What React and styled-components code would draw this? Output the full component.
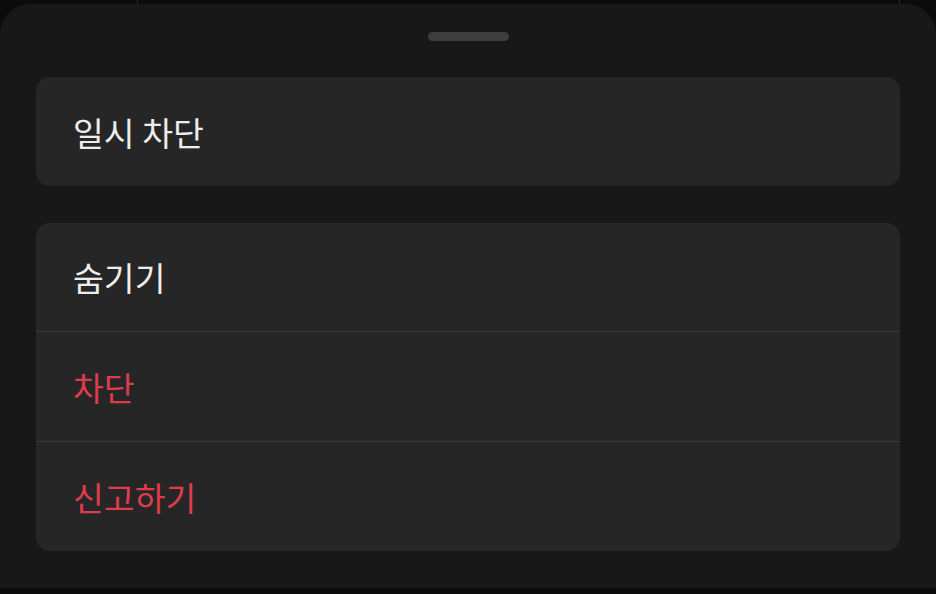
import React from "react";
import styled, { createGlobalStyle } from "styled-components";

const Global = createGlobalStyle`
  html, body {
    margin: 0;
    padding: 0;
    width: 936px;
    height: 594px;
    overflow: hidden;
    background-color: #0b0b0b;
    background-image:
      linear-gradient(#2a2a2a, #2a2a2a),
      linear-gradient(#2a2a2a, #2a2a2a);
    background-size: 1px 4px, 1px 4px;
    background-position: 137px 0, 899px 0;
    background-repeat: no-repeat;
    font-family: "Noto Sans CJK KR", "Noto Sans", sans-serif;
  }
  #root { width: 936px; height: 594px; }
`;

const Sheet = styled.div`
  margin-top: 4px;
  height: 584px;
  box-sizing: border-box;
  background: #181818;
  border-radius: 30px 30px 0 0;
  padding: 28px 36px 0;
  display: flex;
  flex-direction: column;
  align-items: stretch;
`;

const Handle = styled.div`
  align-self: center;
  width: 81px;
  height: 9px;
  border-radius: 5px;
  background: #3d3d3d;
  margin-bottom: 36px;
`;

const Group = styled.div`
  background: #262626;
  border-radius: 14px;
  overflow: hidden;
  display: flex;
  flex-direction: column;
  margin-bottom: 37px;
`;

const Row = styled.div`
  height: 109px;
  box-sizing: content-box;
  display: flex;
  align-items: center;
  padding: 0 0 0 37px;
  font-size: 33.5px;
  font-weight: 400;
  line-height: 1;
  color: ${(p) => (p.$danger ? "#de3c4c" : "#ededed")};
  & + & {
    border-top: 1px solid #3a3a3a;
  }
`;

export default function App() {
  return (
    <>
      <Global />
      <Sheet>
        <Handle />
        <Group>
          <Row>일시 차단</Row>
        </Group>
        <Group>
          <Row>숨기기</Row>
          <Row $danger>차단</Row>
          <Row $danger>신고하기</Row>
        </Group>
      </Sheet>
    </>
  );
}
